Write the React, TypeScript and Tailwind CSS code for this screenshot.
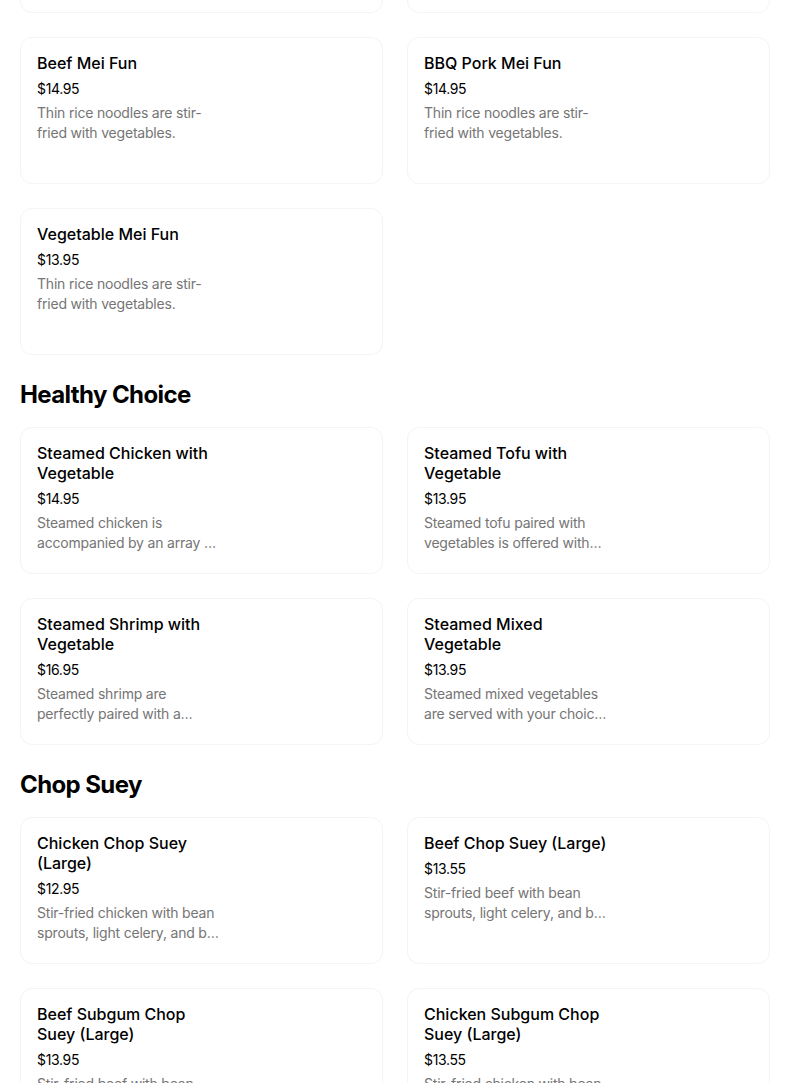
const font = { fontFamily: 'Inter, "Noto Sans", sans-serif' };

type Item = { name: string; price: string; desc: string };

const mf = 'Thin rice noodles are stir-fried with vegetables.';

const sections: { title?: string; items: Item[] }[] = [
  {
    items: [
      { name: 'Chicken Mei Fun', price: '$13.95', desc: mf },
      { name: 'Shrimp Mei Fun', price: '$14.95', desc: mf },
      { name: 'Beef Mei Fun', price: '$14.95', desc: mf },
      { name: 'BBQ Pork Mei Fun', price: '$14.95', desc: mf },
      { name: 'Vegetable Mei Fun', price: '$13.95', desc: mf },
    ],
  },
  {
    title: 'Healthy Choice',
    items: [
      {
        name: 'Steamed Chicken with Vegetable',
        price: '$14.95',
        desc: 'Steamed chicken is accompanied by an array of fresh vegetables.',
      },
      {
        name: 'Steamed Tofu with Vegetable',
        price: '$13.95',
        desc: 'Steamed tofu paired with vegetables is offered with your choice of sauce.',
      },
      {
        name: 'Steamed Shrimp with Vegetable',
        price: '$16.95',
        desc: 'Steamed shrimp are perfectly paired with a medley of vegetables.',
      },
      {
        name: 'Steamed Mixed Vegetable',
        price: '$13.95',
        desc: 'Steamed mixed vegetables are served with your choice of sauce.',
      },
    ],
  },
  {
    title: 'Chop Suey',
    items: [
      {
        name: 'Chicken Chop Suey (Large)',
        price: '$12.95',
        desc: 'Stir-fried chicken with bean sprouts, light celery, and bok choy.',
      },
      {
        name: 'Beef Chop Suey (Large)',
        price: '$13.55',
        desc: 'Stir-fried beef with bean sprouts, light celery, and bok choy.',
      },
      {
        name: 'Beef Subgum Chop Suey (Large)',
        price: '$13.95',
        desc: 'Stir-fried beef with bean sprouts, mixed vegetables and water chestnuts.',
      },
      {
        name: 'Chicken Subgum Chop Suey (Large)',
        price: '$13.55',
        desc: 'Stir-fried chicken with bean sprouts, mixed vegetables and water chestnuts.',
      },
    ],
  },
];

function Card({ item }: { item: Item }) {
  return (
    <div className="h-[147px] overflow-hidden rounded-xl border border-[#f4f4f4] bg-white px-4 pt-[15px]">
      <div className="w-[186px]">
        <div className="text-base font-medium leading-5 text-black">{item.name}</div>
        <div className="mt-[6px] text-sm leading-5 tracking-tight text-black">{item.price}</div>
        <div className="mt-1 line-clamp-2 text-sm leading-5 tracking-[-0.2px] text-[#757575]">{item.desc}</div>
      </div>
    </div>
  );
}

export default function App() {
  return (
    <main className="h-[1083px] overflow-hidden bg-white" style={font}>
      <div className="mt-[-134px] w-[770px] pl-5">
        {sections.map((s, i) => (
          <section key={i} className={s.title ? 'mt-6' : ''}>
            {s.title && (
              <h2 className="mb-4 text-2xl font-bold leading-8 tracking-tight text-black">{s.title}</h2>
            )}
            <div className="grid grid-cols-2 gap-6">
              {s.items.map((it) => (
                <Card key={it.name} item={it} />
              ))}
            </div>
          </section>
        ))}
      </div>
    </main>
  );
}
